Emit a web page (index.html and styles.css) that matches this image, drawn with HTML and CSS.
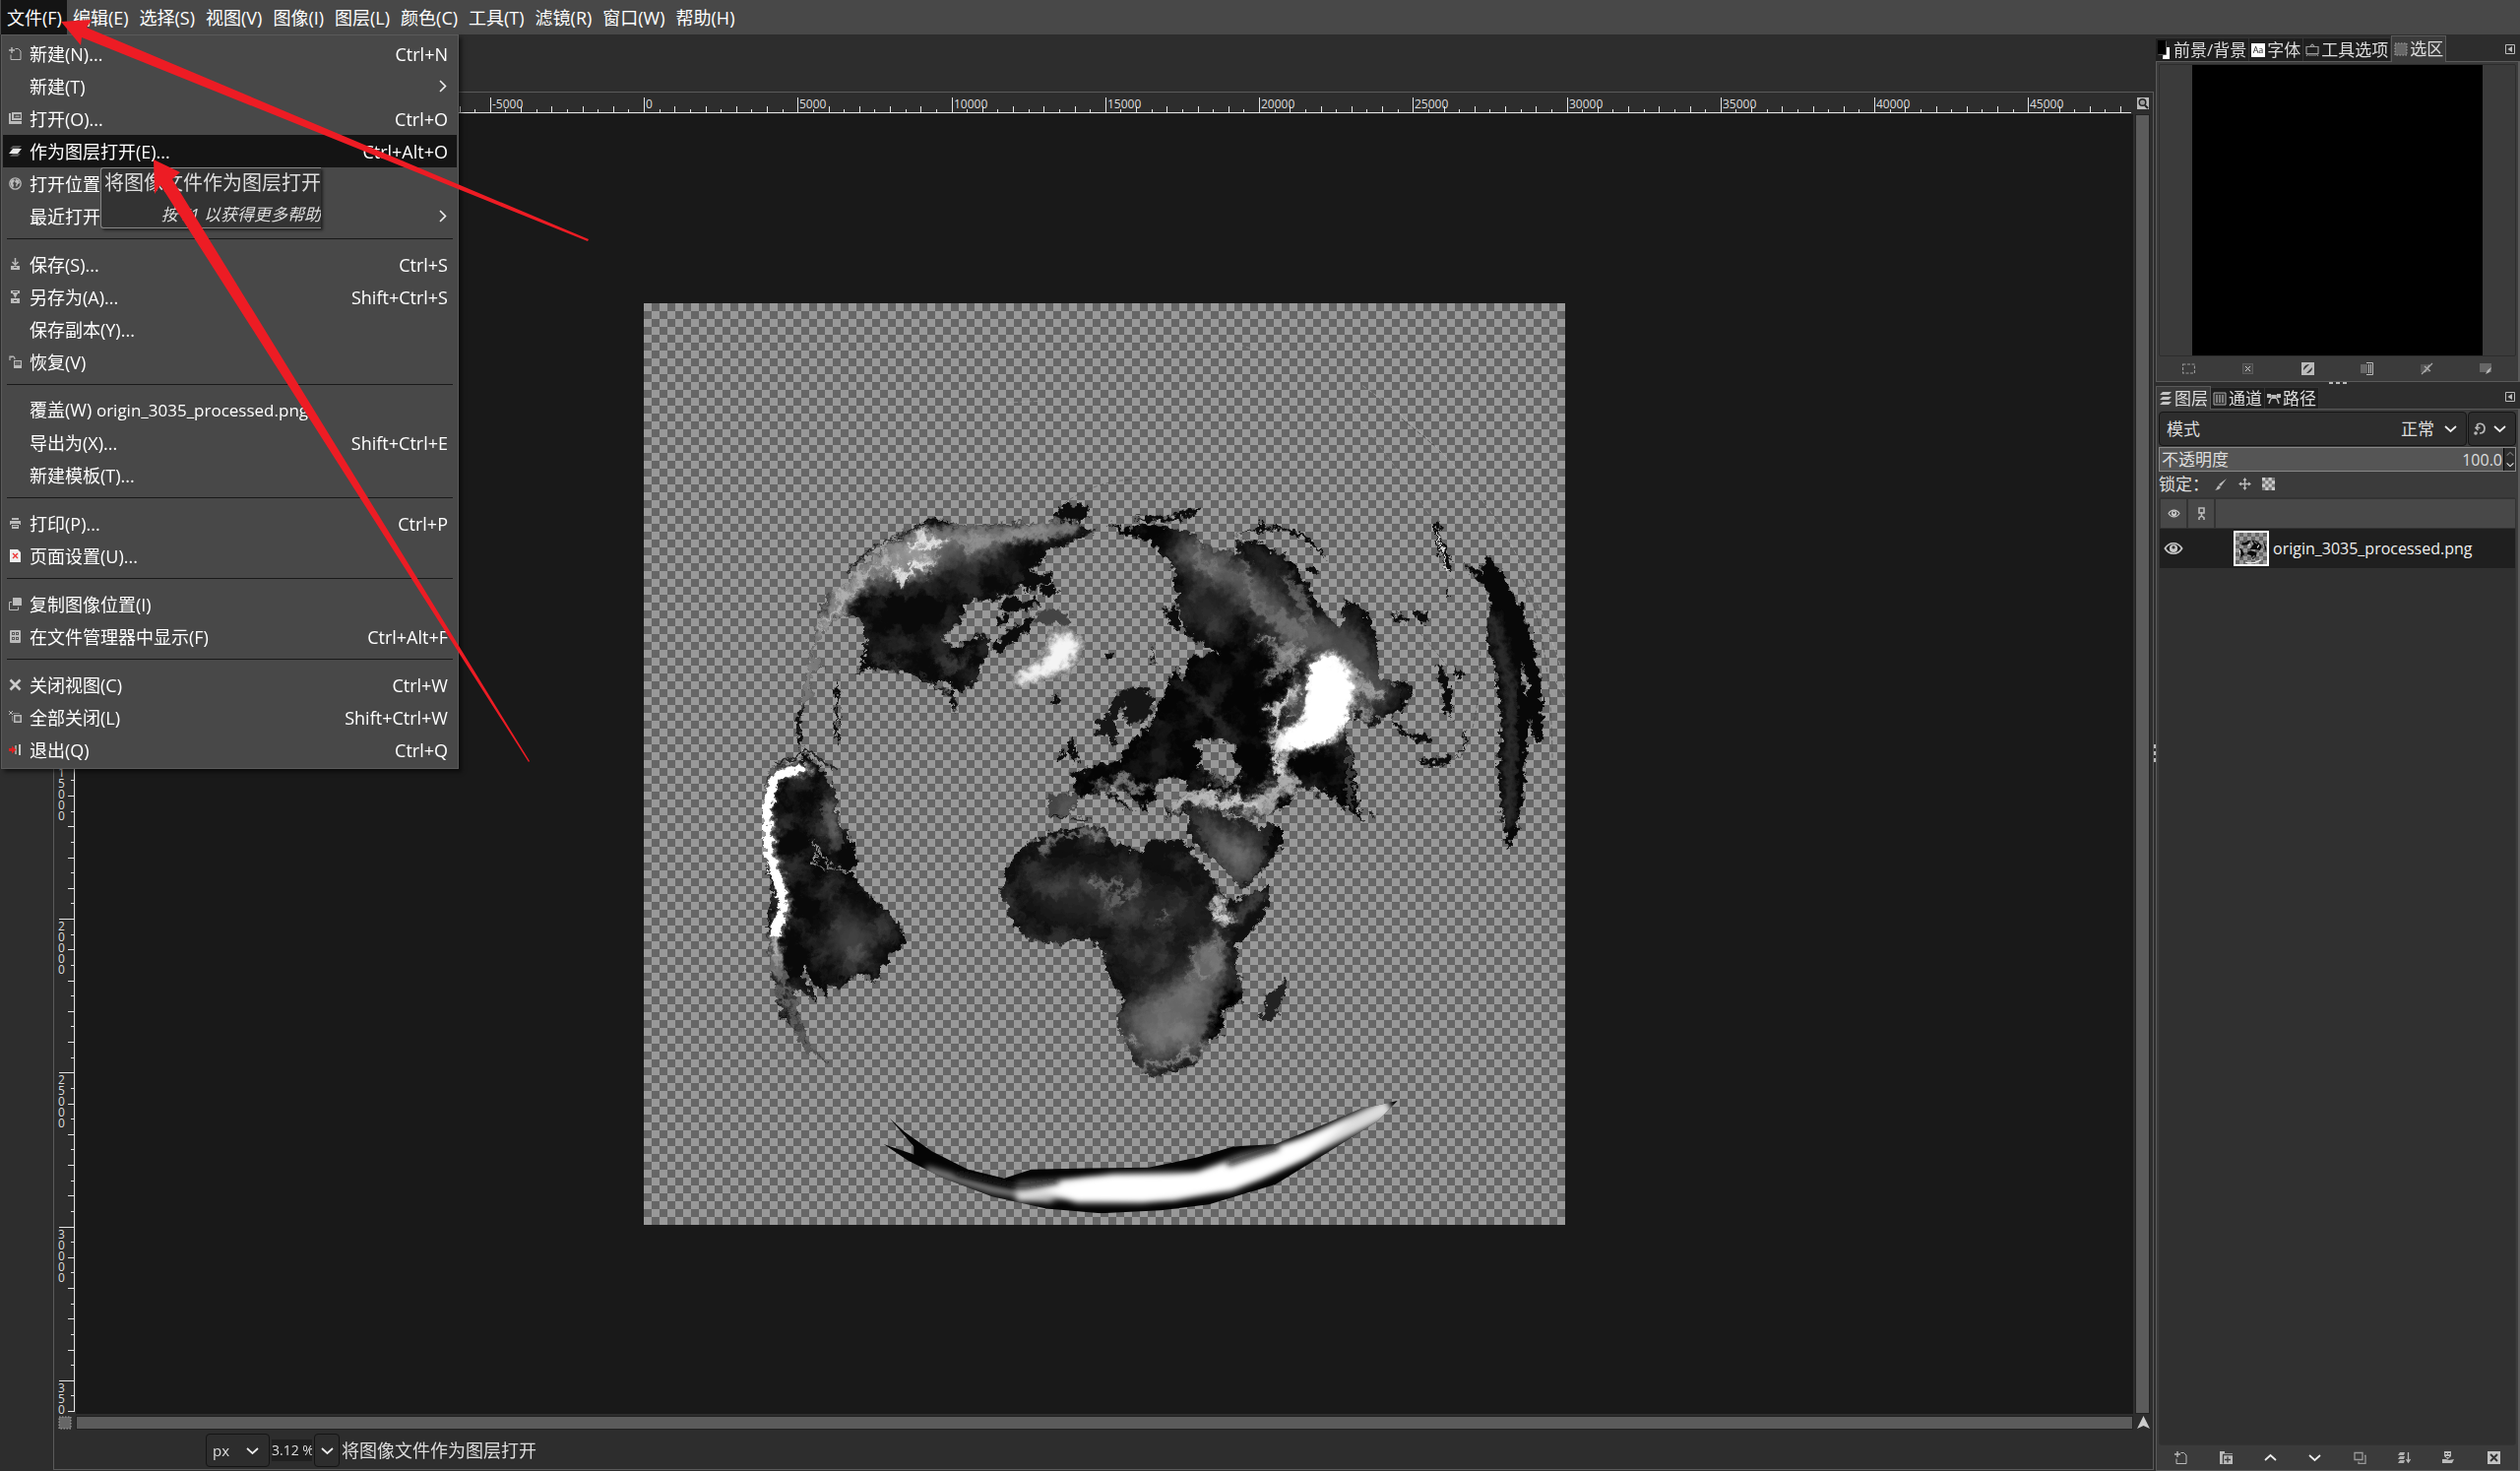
FILE: index.html
```html
<!DOCTYPE html>
<html lang="zh-CN">
<head>
<meta charset="utf-8">
<title>GIMP</title>
<link rel="stylesheet" href="styles.css">
</head>
<body>
<svg class="defs" aria-hidden="true">
  <symbol id="i-new" viewBox="0 0 13 13"><path d="M3 0v6M0 3h6" stroke="currentColor" stroke-width="1.4"/><path d="M6.5 1.5h3l2.5 2.500v8.500h-10v-5" fill="none" stroke="currentColor"/></symbol>
  <symbol id="i-open" viewBox="0 0 13 13"><path d="M3 0h10v8H3z" fill="currentColor"/><path d="M5 2h7v4H5z" fill="#555"/><path d="M6 5l2-2 1 1 1-1 1 2z" fill="#999"/><path d="M0 1h2v8h11v3H0z" fill="currentColor"/></symbol>
  <symbol id="i-layers" viewBox="0 0 13 13"><path d="M4 1h9l-3 3H1z" fill="#555"/><path d="M4 9h8l-3 3H1z" fill="#555"/><path d="M4 4h9l-4 5H0z" fill="#e8e8e8"/></symbol>
  <symbol id="i-globe" viewBox="0 0 13 13"><circle cx="6.500" cy="6.500" r="5.700" fill="none" stroke="currentColor" stroke-width="1.300"/><path d="M2 4l2-2 2 1-1 2-1 1 1 2-1 3-2-3zM7 2l3 1 1 3-2 1-1 3-1-2 1-2-2-1z" fill="currentColor"/></symbol>
  <symbol id="i-save" viewBox="0 0 13 13"><path d="M6.500 0v6M3.500 4l3 3 3-3" stroke="currentColor" stroke-width="1.500" fill="none"/><path d="M2 8h9v4H2z" fill="currentColor"/><path d="M5 9h3v1H5z" fill="#555"/></symbol>
  <symbol id="i-saveas" viewBox="0 0 13 13"><path d="M2 0h9v3H2zM2 8h9v5H2zM4 3h5l-2.500 5z" fill="currentColor"/><path d="M4 1h5v1H4zM5 10h3v1H5z" fill="#444"/></symbol>
  <symbol id="i-revert" viewBox="0 0 13 13"><path d="M1 5V1h4M2 2c3-2 4 0 4 2" fill="none" stroke="currentColor" stroke-width="1.200"/><path d="M5 5h8v8H5z" fill="currentColor"/><path d="M6 6h6v4H6z" fill="#666"/></symbol>
  <symbol id="i-print" viewBox="0 0 13 13"><path d="M3 1h7v2H3zM1 4h11v4h-1v-1H2v1H1zM3 8h7v4H3z" fill="currentColor"/><path d="M4 9h5v1H4z" fill="#555"/></symbol>
  <symbol id="i-page" viewBox="0 0 13 13"><path d="M1 0h8l3 3v10H1z" fill="#eee"/><path d="M4 4l5 5M9 4l-5 5" stroke="#e33" stroke-width="1.300"/></symbol>
  <symbol id="i-copy" viewBox="0 0 13 13"><path d="M3 4.500H.5v8h9v-3" fill="none" stroke="currentColor"/><path d="M4 0h8l1 1v7H4z" fill="currentColor"/></symbol>
  <symbol id="i-cab" viewBox="0 0 13 13"><rect x="1" width="11" height="13" rx="1" fill="currentColor"/><path d="M3 2h3v3H3zM7 2h3v3H7zM3 7h3v3H3zM7 7h3v3H7z" fill="#555"/><path d="M4 3h1v1H4zM8 3h1v1H8zM4 8h1v1H4zM8 8h1v1H8z" fill="#ccc"/></symbol>
  <symbol id="i-x" viewBox="0 0 13 13"><path d="M1.500 1.500l10 10M11.500 1.500l-10 10" stroke="#ccc" stroke-width="2.600"/></symbol>
  <symbol id="i-closeall" viewBox="0 0 13 13"><path d="M0 0l4 4M4 0L0 4" stroke="currentColor"/><path d="M3.500 5v5h1M4 2.500h7" stroke="#888" fill="none"/><path d="M5 4h8v8H5z" fill="currentColor"/><path d="M6.500 5.500h5v5h-5z" fill="#555"/></symbol>
  <symbol id="i-quit" viewBox="0 0 13 13"><path d="M5 1h7v11l-4-1z" fill="#3c4a3c"/><path d="M10 1h2v11h-2z" fill="#ccc"/><path d="M6 2h2v9H6z" fill="#999"/><path d="M0 5h3V2.500l4.500 4L3 10.500V8H0z" fill="#d22"/></symbol>
  <symbol id="i-chev" viewBox="0 0 13 13"><path d="M1 4l5.500 5L12 4" fill="none" stroke="#eee" stroke-width="1.700"/></symbol>
  <symbol id="i-up" viewBox="0 0 13 13"><path d="M1 9l5.500-5L12 9" fill="none" stroke="#eee" stroke-width="1.700"/></symbol>
  <symbol id="i-right" viewBox="0 0 13 13"><path d="M5 1l5.500 5.500L5 12" fill="none" stroke="#eee" stroke-width="1.600"/></symbol>
  <symbol id="i-fgbg" viewBox="0 0 14 20"><path d="M6 7h6v12H5z" fill="#fff"/><path d="M0 0h9v14H0z" fill="#000"/><path d="M.5 14.500H8.500V.5" stroke="#555" fill="none"/></symbol>
  <symbol id="i-font" viewBox="0 0 14 14"><path d="M0 0h14v14H0z" fill="#fff"/><text x="7" y="10" text-anchor="middle" font-size="9" fill="#222">Aa</text></symbol>
  <symbol id="i-tool" viewBox="0 0 14 14"><path d="M1 3.500h12v7H1zM5 3l2-2 2 2M1 13l1.500-2M13 13l-1.500-2M3 12h8" fill="none" stroke="#999" stroke-width="1.200"/></symbol>
  <symbol id="i-sel" viewBox="0 0 14 14"><path d="M1 1h12v12H1z" fill="#666" stroke="#aaa" stroke-dasharray="1.500 1.500"/></symbol>
  <symbol id="i-tabmenu" viewBox="0 0 10 10"><path d="M.5.5h9v9h-9z" fill="none" stroke="#bbb"/><path d="M7 2v6L2.500 5z" fill="#bbb"/></symbol>
  <symbol id="i-stack" viewBox="0 0 14 14"><path d="M4 0h9l-3 3H1zM4 5h9l-3 3H1zM4 10h9l-3 3H1z" fill="#c4c4c4"/></symbol>
  <symbol id="i-chan" viewBox="0 0 14 14"><path d="M1 1h12v12H1z" fill="#333" stroke="#aaa"/><path d="M4 3v8M7 3v8M10 3v8" stroke="#999" stroke-width="1.500"/></symbol>
  <symbol id="i-path" viewBox="0 0 14 14"><path d="M0 4h14M2 12c1-4 3-7 5-7s4 3 5 7" stroke="#bbb" stroke-width="1.500" fill="none"/><path d="M0 2h4v4H0zM10 2h4v4h-4zM5 3h4v4H5z" fill="#bbb"/></symbol>
  <symbol id="i-selall" viewBox="0 0 13 13"><path d="M.5 2h12v9H.5z" fill="none" stroke="#999" stroke-width="1.200" stroke-dasharray="3 1.500"/></symbol>
  <symbol id="i-selnone" viewBox="0 0 13 13"><path d="M1.500 1.500h10v10h-10z" fill="#484848" stroke="#777" stroke-dasharray="1 1"/><path d="M4 4l5 5M9 4l-5 5" stroke="#ccc"/></symbol>
  <symbol id="i-invert" viewBox="0 0 13 13"><path d="M0 0h13v13H0z" fill="#bbb"/><path d="M2 8c0-4 3-6 6-6zM11 5c0 4-3 6-6 6z" fill="#333"/></symbol>
  <symbol id="i-tochan" viewBox="0 0 13 13"><path d="M0 2h7v9H0z" fill="#666"/><path d="M6 .5h6.500v12H6" fill="none" stroke="#bbb"/><path d="M8.500 2v9M10.500 2v9" stroke="#bbb"/></symbol>
  <symbol id="i-topath" viewBox="0 0 13 13"><path d="M0 2h9v8H0z" fill="#555"/><path d="M1 12L12 1M4 4l6 5M9 3l-5 7" stroke="#aaa" stroke-width="1.300"/></symbol>
  <symbol id="i-stroke" viewBox="0 0 13 13"><path d="M0 1h12v9H0z" fill="#666"/><path d="M12 5l-2 5-4 2 2-4z" fill="#bbb"/></symbol>
  <symbol id="i-reset" viewBox="0 0 13 13"><path d="M2.500 5.500h5M5.500 3L3 5.500 5.500 8" fill="none" stroke="#b8b8b8" stroke-width="1.500"/><path d="M4 3c2-3 8-2 8 3 0 3-2 5-5 5" fill="none" stroke="#b8b8b8" stroke-width="1.700"/><circle cx="3" cy="11" r="1.800" fill="#b8b8b8"/></symbol>
  <symbol id="i-brush" viewBox="0 0 13 13"><path d="M12 1L6 9 4 7z" fill="#bbb"/><path d="M4 8l2 2-2 2-4 1c2-1 2-4 4-5z" fill="#bbb"/></symbol>
  <symbol id="i-move" viewBox="0 0 13 13"><path d="M6.500 1v11M1 6.500h11" stroke="#bbb" stroke-width="1.400"/><path d="M6.500 0l2 3h-4zM6.500 13l2-3h-4zM0 6.500l3-2v4zM13 6.500l-3-2v4z" fill="#bbb"/></symbol>
  <symbol id="i-alpha" viewBox="0 0 12 12"><path d="M0 0h12v12H0z" fill="#777"/><path d="M0 0h3v3H0zM6 0h3v3H6zM3 3h3v3H3zM9 3h3v3H9zM0 6h3v3H0zM6 6h3v3H6zM3 9h3v3H3zM9 9h3v3H9z" fill="#ccc"/></symbol>
  <symbol id="i-eye" viewBox="0 0 18 13"><path d="M1 6.500C5 0 13 0 17 6.500 13 13 5 13 1 6.500z" fill="none" stroke="#c8c8c8" stroke-width="1.600"/><circle cx="9" cy="6.500" r="3.800" fill="#c8c8c8"/><circle cx="9" cy="5.500" r="1.500" fill="#333"/></symbol>
  <symbol id="i-chain" viewBox="0 0 9 14"><path d="M2 1h5v5H2zM2 13v-2l2.500-2L7 11v2M4.500 5v5" fill="none" stroke="#bbb" stroke-width="1.600"/></symbol>
  <symbol id="i-group" viewBox="0 0 13 13"><path d="M0 0h5v2h8v11H0z" fill="#bbb"/><path d="M3 3.500h10M3.500 3.500v9M8 5.500v6M5 8.500h6" stroke="#3a3a3a" stroke-width="1.300"/></symbol>
  <symbol id="i-dup" viewBox="0 0 13 13"><path d="M1 1.500h8v7H1zM11 4.500h1v8H5v-2" fill="none" stroke="#999" stroke-width="1.300"/></symbol>
  <symbol id="i-merge" viewBox="0 0 13 13"><path d="M2 1h5L6 4H0zM2 5h5L6 8H0zM2 9h5l-1 3H0z" fill="#b0b0b0"/><path d="M10.500 1v9M8.500 8l2 3 2-3" stroke="#bbb" fill="none" stroke-width="1.300"/></symbol>
  <symbol id="i-mask" viewBox="0 0 13 13"><path d="M2 0h7v5L5.500 8 2 5zM0 8h4l3 1 5-1-2 4H0z" fill="#bbb"/><path d="M3 2h2v1H3zM6 2h2v1H6zM4 5h3v1H4z" fill="#333"/></symbol>
  <symbol id="i-del" viewBox="0 0 13 13"><path d="M0 0h13v13H0z" fill="#c4c4c4"/><path d="M3 3l7 7M10 3l-7 7" stroke="#333" stroke-width="2"/></symbol>
  <symbol id="i-zoom" viewBox="0 0 12 12"><path d="M0 0h12v12H0z" fill="#bbb"/><circle cx="5.500" cy="5" r="3.300" fill="#999" stroke="#222" stroke-width="1.500"/><path d="M8 8l3 3" stroke="#222" stroke-width="2"/></symbol>
  <symbol id="i-nav" viewBox="0 0 13 13"><path d="M6.500 0L13 13 6.500 10 0 13z" fill="#ccc"/></symbol>
</svg>

<nav class="menubar">
  <button class="active">文件(F)</button><button>编辑(E)</button><button>选择(S)</button><button>视图(V)</button><button>图像(I)</button><button>图层(L)</button><button>颜色(C)</button><button>工具(T)</button><button>滤镜(R)</button><button>窗口(W)</button><button>帮助(H)</button>
</nav>

<main class="workspace">
  <aside class="toolbox"></aside>

  <section class="image-window">
    <div class="corner"></div>
    <svg class="ruler-h" id="ruler-h"></svg>
    <button class="icon-cell" aria-label="缩放"><svg width="12" height="12"><use href="#i-zoom"/></svg></button>
    <svg class="ruler-v" id="ruler-v"></svg>
    <div class="viewport">
      <div class="picture" id="picture">
        <svg viewBox="22 13 1529 1529" class="map">
          <defs>
            <filter id="rough" x="-5%" y="-5%" width="110%" height="110%" color-interpolation-filters="sRGB"><feTurbulence type="fractalNoise" baseFrequency=".09" numOctaves="4" seed="4"/><feDisplacementMap in="SourceGraphic" scale="22" xChannelSelector="R" yChannelSelector="G"/></filter>
            <filter id="wisp" x="-20%" y="-20%" width="140%" height="140%" color-interpolation-filters="sRGB"><feGaussianBlur in="SourceGraphic" stdDeviation="5" result="b"/><feTurbulence type="fractalNoise" baseFrequency=".03" numOctaves="5" seed="9" result="n"/><feDisplacementMap in="b" in2="n" scale="60" xChannelSelector="R" yChannelSelector="G"/></filter>
            <filter id="soft" x="-40%" y="-40%" width="180%" height="180%"><feGaussianBlur stdDeviation="18"/></filter>
            <filter id="soft2" x="-30%" y="-30%" width="160%" height="160%"><feGaussianBlur stdDeviation="5"/></filter>
            <filter id="terrain" x="0" y="0" width="100%" height="100%" color-interpolation-filters="sRGB"><feTurbulence type="fractalNoise" baseFrequency=".02" numOctaves="6" seed="21"/><feColorMatrix values="0 0 0 0 1  0 0 0 0 1  0 0 0 0 1  3 0 0 0 -1.300"/></filter>
            <filter id="shade" x="0" y="0" width="100%" height="100%" color-interpolation-filters="sRGB"><feTurbulence type="fractalNoise" baseFrequency=".03" numOctaves="5" seed="5"/><feColorMatrix values="0 0 0 0 0  0 0 0 0 0  0 0 0 0 0  0 3 0 0 -1.200"/></filter>
            <clipPath id="c-na"><path d="M773 392L740 378 760 365 750 348 735 345 718 352 715 368 690 380 640 378 600 382 545 384 520 372 490 375 460 390 420 420 385 448 355 482 330 495 318 520 305 560 298 600 290 640 280 685 274 710 280 750 286 745 281 705 290 680 302 665 297 640 303 626 322 616 310 605 303 606 306 580 322 555 345 532 370 528 386 545 388 580 385 615 372 632 395 618 430 622 465 628 500 645 515 638 530 645 545 655 562 652 572 640 583 615 598 590 590 560 565 570 545 580 515 575 525 560 545 545 555 515 570 505 600 508 608 500 640 490 665 455 685 440 690 422 735 408Z"/></clipPath>
            <clipPath id="c-sa"><path d="M225 800L245 778 275 778 290 760 320 790 340 830 345 870 370 910 375 945 360 955 400 1000 440 1035 456 1065 452 1082 428 1095 410 1135 370 1128 345 1150 325 1145 330 1162 300 1140 290 1108 286 1130 312 1172 272 1150 282 1200 295 1240 330 1278 285 1245 250 1190 232 1120 226 1040 235 990 222 920 218 860Z"/></clipPath>
            <clipPath id="c-as"><path clip-rule="evenodd" d="M795 378L830 388 860 380 930 392 960 420 1005 428 1010 405 1050 412 1095 438 1120 470 1128 490 1150 525 1180 555 1185 505 1215 518 1237 560 1241 600 1240 635 1265 645 1285 638 1298 660 1280 690 1262 700 1240 695 1245 712 1215 710 1192 690 1185 725 1200 760 1202 820 1213 870 1180 848 1150 820 1110 818 1090 848 1060 862 1030 868 985 855 975 850 982 865 1025 870 1045 892 1058 876 1082 880 1082 910 1055 950 1015 985 990 955 945 918 925 890 928 858 890 865 885 850 920 828 925 805 895 800 870 812 874 835 855 842 862 860 840 842 825 825 800 815 795 822 838 858 822 850 785 822 765 828 738 832 738 845 722 865 700 868 690 862 695 828 735 826 742 805 728 795 770 780 810 772 830 738 865 712 875 680 905 620 915 640 930 600 975 592 925 565 910 520 905 485 900 450 880 425 850 400 820 398ZM935 740L950 760 940 780 975 795 1000 810 1015 790 1000 765 1003 745 965 735Z"/></clipPath>
            <clipPath id="c-af"><path d="M622 960L625 945 665 905 700 890 760 880 790 885 795 905 850 925 860 905 915 905 930 922 955 950 975 985 995 1002 1030 995 1060 975 1058 1010 1035 1050 1007 1075 1003 1125 1018 1142 1015 1170 982 1190 980 1225 957 1240 940 1275 905 1287 858 1297 835 1275 825 1240 805 1215 818 1165 790 1125 785 1085 760 1070 700 1075 660 1068 635 1045 625 1010 612 990 622 975Z"/></clipPath>
            <clipPath id="c-au"><path clip-rule="evenodd" d="M1382 445L1412 458 1422 430 1445 460 1475 510 1500 580 1510 640 1516 740 1500 735 1492 700 1488 740 1482 830 1470 890 1457 920 1443 850 1440 780 1445 700 1434 620 1420 560 1430 520 1418 485ZM1478 610L1488 630 1490 670 1480 645Z"/></clipPath>
            <clipPath id="c-an"><path d="M420 1408L470 1425 470 1412 430 1365 455 1388 500 1420 560 1450 620 1465 665 1450 760 1448 860 1447 940 1430 1000 1412 1070 1408 1140 1380 1210 1350 1273 1336 1240 1370 1160 1420 1070 1475 960 1508 880 1518 780 1523 690 1515 600 1495 520 1465 460 1435Z"/></clipPath>
          </defs>
          <g filter="url(#rough)">
            <g clip-path="url(#c-na)">
              <path d="M250 330h540v440H250z" fill="#0a0a0a"/>
              <path d="M285 680L310 590 345 510 400 450 480 405 610 395 740 378" stroke="#777" stroke-width="36" fill="none" filter="url(#soft2)"/>
              <path d="M390 470L520 430 620 400" stroke="#666" stroke-width="45" fill="none" filter="url(#soft)"/>
              <path d="M430 460L500 425" stroke="#ccc" stroke-width="20" filter="url(#soft)"/>
              <g filter="url(#wisp)" fill="none" stroke="#ddd"><path d="M310 560L335 515 380 470 430 430" stroke-width="8"/><path d="M440 425L520 405 620 405 700 390" stroke="#999" stroke-width="8"/><path d="M430 462L500 440M465 420l50-15" stroke-width="13" stroke="#fff"/><path d="M400 605l60 15M520 620l40-25" stroke="#333" stroke-width="10"/></g>
              <path d="M250 330h540v440H250z" filter="url(#terrain)" opacity=".12"/>
              <path d="M360 375l80 12 90-22 60 12 150-12" stroke="#000" stroke-width="10" fill="none" filter="url(#soft2)"/>
            </g>
            <g fill="#0c0c0c">
              <path d="M640 478l20-22 25 8 15-8-4 22-25 6-10 10zM612 508l30-8 12 8 20-8 4 12-25 6-20 12-20-8zM600 590l20-30 35-20 15-10-15 30-25 20-22 14zM680 490l20-14 10 14-18 10zM540 655l-2 34-8-18 6-8-14-6zM605 535l18-6 4 12-20 8zM650 510l20 6-14 10z"/>
              <path d="M670 535l20-18 20 4 22 18-5 15-20-14-24 8z" fill="#444"/>
              <path d="M705 370l8-18 28-8 20 6 0 16-30 12zM700 665l18 3-6 10-14-3zM788 596l14 0 0 8-12 2z"/>
              <path d="M860 375l-28-8 40-3 25 6 10-10 40-10-10 15-45 10zM1000 400l40-12 5-16 10 12 40 2 35 20 30 35-35-30-30-20-35-2z"/>
              <path d="M865 578l5 30 6 6-10-5zM885 520l20 0 10 30-6 10-16-15z"/>
              <path d="M776 728L775 708 790 698 800 672 822 650 862 652 855 662 868 668 862 700 835 712 822 705 818 690 828 680 818 678 810 692 803 712 808 745 798 748 792 728z" fill="#161616"/>
              <path d="M714 755l10 2-6 14-8-4zM730 735l8-4-2 20 10 15-8 12-8-8z"/>
              <path d="M1333 380l8-8 4 30 18 35-6 30-16-40zM1352 480l8 20-4 8zM1335 610l20 20 8 25 0 45-12-8-2-35zM1120 450l18 0 5 12-20-4zM1265 700l25 25 20 5 20-2-2 15-15 0-45-25zM1300 772l62-7 0 12-45 2zM1386 722l4-4-6 25-10 25 6-28zM1260 530l20 0 8 10-16 3zM1298 522l22 4 6 14-14 4zM1368 615l14 14-8 10z"/>
              <path d="M1225 852l12 10-6 6zM1134 825l12 0-3 12-8-4zM1050 1205l-6-8 10-15 0-20 22-14 6-20 8 8-14 50-14 22z" fill="#222"/>
              <path d="M342 640l4 8-2 40-4 15 10 50-12-30zM340 690l8 6-2 20z"/>
            </g>
            <path d="M700 550l38 3 17 22-7 25-18 25-30 15-38 2-32 12 10-28 30-20 20-26z" fill="#777"/>
            <path d="M705 560l34 3 8 17-25 42-45 14-42 12 12-22 38-20z" fill="#f4f4f4" filter="url(#soft2)"/>
            <g clip-path="url(#c-sa)">
              <path d="M200 750h270v540H200z" fill="#090909"/>
              <path d="M350 1010L420 1060 380 1110 320 1090z" fill="#444" filter="url(#soft)"/>
              <path d="M325 840l20 80" stroke="#444" stroke-width="22" filter="url(#soft2)"/>
              <path d="M300 785L240 795 226 840 230 910 250 980 256 1020 238 1065 245 1130" stroke="#ddd" stroke-width="13" fill="none" filter="url(#soft2)"/>
              <path d="M290 785L240 798 224 860 230 930 248 980 252 1020 240 1060" stroke="#fff" stroke-width="14" fill="none"/>
              <path d="M235 1100L265 1190 310 1265" stroke="#666" stroke-width="16" fill="none" filter="url(#wisp)"/>
              <path d="M200 750h270v540H200z" filter="url(#terrain)" opacity=".15"/>
            </g>
            <path d="M362 958l-35-15-25-40 8 36-10 5 25 8" stroke="#999" stroke-width="2.500" fill="none"/>
            <g clip-path="url(#c-as)">
              <path d="M680 340h640v660H680z" fill="#050505"/>
              <path d="M910 410L960 450 1040 490 1100 560 1180 570" stroke="#5c5c5c" stroke-width="55" fill="none" filter="url(#soft)"/>
              <path d="M930 500l60 60" stroke="#333" stroke-width="50" filter="url(#soft)"/>
              <path d="M910 640l80 80" stroke="#333" stroke-width="8" filter="url(#soft2)"/>
              <path d="M1010 660l40 0" stroke="#444" stroke-width="40" filter="url(#soft)"/>
              <path d="M1180 560L1250 680" stroke="#5a5a5a" stroke-width="50" filter="url(#soft)"/>
              <path d="M920 850h160l-40 110-40 30z" fill="#1c1c1c"/><path d="M935 870l40 60 50 50 20-60z" fill="#777" filter="url(#soft)"/>
              <path d="M690 865v-45h50v40z" fill="#444"/>
              <path d="M1130 605L1165 590 1192 612 1205 650 1195 700 1165 742 1110 754 1075 757 1065 732 1090 715 1112 700 1120 640Z" fill="#fff" filter="url(#soft2)"/>
              <path d="M1132 608L1165 596 1185 618 1196 650 1187 700 1160 738 1110 750 1082 748 1085 725 1115 710 1122 650Z" fill="#fff"/>
              <path d="M1100 625L1120 640 1112 700 1085 715 1088 680z" fill="#383838" filter="url(#soft2)"/>
              <g filter="url(#wisp)" fill="none" stroke="#eee"><path d="M885 855L930 830 970 835 1040 850 1090 820 1085 770" stroke="#aaa" stroke-width="26"/><path d="M940 820l40 10 60 20" stroke-width="7"/><path d="M1060 740L1085 800M1070 720L1100 650" stroke-width="15"/><path d="M1045 570L1090 600 1055 640M1090 570l20 50" stroke-width="14" stroke="#999"/><path d="M1000 440L1040 520 1120 560M940 410L960 470M1080 460l60 90" stroke="#777" stroke-width="11"/><path d="M780 822L800 808 850 815" stroke="#bbb" stroke-width="9"/><path d="M1190 620l50 50M1225 700l-20-30" stroke="#aaa" stroke-width="14"/><path d="M960 795h45" stroke-width="6"/></g>
              <path d="M1190 750l5 100" stroke="#3a3a3a" stroke-width="18" filter="url(#soft2)"/>
              <path d="M680 340h640v660H680z" filter="url(#terrain)" opacity=".1"/>
            </g>
            <g clip-path="url(#c-af)">
              <path d="M600 870h480v440H600z" fill="#101010"/>
              <path d="M640 960L780 950 960 1010 960 1060 700 1030z" fill="#262626" filter="url(#soft)"/>
              <path d="M830 1180L960 1090 990 1120 950 1240 860 1285 820 1210z" fill="#666" filter="url(#soft)"/>
              <path d="M800 1060h110l0 60-80 20z" fill="#222" filter="url(#soft)"/>
              <path d="M935 1085l30-15 20 30-10 35-35-5z" fill="#666" filter="url(#soft2)"/>
              <path d="M1000 1040l50-50" stroke="#444" stroke-width="15" filter="url(#soft2)"/>
              <g filter="url(#wisp)" fill="none" stroke="#ddd"><path d="M675 912L730 892 785 892" stroke="#999" stroke-width="10"/><path d="M760 972h35l15 35M830 985l22 0M890 1010l0 20" stroke="#777" stroke-width="12"/><path d="M978 1000l0 40 20-10" stroke-width="15"/><path d="M935 1080l0 45 25 10M965 1070l20 20" stroke="#aaa" stroke-width="6"/><path d="M840 1280L910 1278 950 1250M825 1215l20 35" stroke="#aaa" stroke-width="9"/></g>
              <path d="M960 1240l25-50 20-40" stroke="#000" stroke-width="22" fill="none" filter="url(#soft2)"/>
              <path d="M600 870h480v440H600z" filter="url(#terrain)" opacity=".13"/>
            </g>
            <g clip-path="url(#c-au)"><path d="M1370 420h160v510h-160z" fill="#080808"/><path d="M1430 530L1462 660 1458 880" stroke="#2c2c2c" stroke-width="20" fill="none" filter="url(#soft2)"/></g>
            <path d="M1340 390l6 40 10 30" stroke="#ddd" stroke-width="3" fill="none"/>
            <g fill="none" stroke="#222" stroke-width="3"><path d="M362 455L400 420 460 388"/><path d="M240 776l30-8 18-14 30 16 22 18" stroke-width="5"/><path d="M480 626l25 22 30 16 6 22M730 870h40" stroke-width="4"/></g>
          </g>
          <g clip-path="url(#c-an)">
            <path d="M410 1330h870v200H410z" fill="#050505"/>
            <path d="M490 1450L600 1483 700 1500" stroke="#888" stroke-width="12" fill="none" filter="url(#soft2)"/>
            <path d="M640 1488L760 1480 900 1485 1040 1450 1150 1400 1260 1345" stroke="#ddd" stroke-width="30" fill="none" filter="url(#soft2)"/>
            <path d="M680 1478L800 1458 940 1455 1010 1428 1120 1400 1200 1365 1120 1430 1000 1485 850 1505 740 1505z" fill="#fff" filter="url(#soft2)"/>
            <path d="M540 1455L650 1478 710 1468M990 1440L1075 1412" stroke="#0a0a0a" stroke-width="10" fill="none" filter="url(#soft2)"/>
            <path d="M580 1500Q780 1550 980 1512" stroke="#000" stroke-width="10" fill="none"/>
          </g>
          <g fill="none" stroke="#bbb" stroke-dasharray="7 4" stroke-width="1"><path d="M1215 150Q1430 300 1510 520T1535 640"/><path d="M1280 205L1335 250" stroke="#222"/><path d="M1480 470Q1528 560 1530 780M720 345q50-38 120-40" stroke="#444"/><path d="M990 75l60 20M625 178l60-3M1190 180Q1260 270 1330 370" opacity=".7"/><path d="M1410 590Q1410 720 1375 770M1310 560l50 60" stroke="#444"/></g>
        </svg>
      </div>
    </div>
    <div class="vscroll"></div>
    <button class="icon-cell" aria-label="快速蒙版"><svg width="14" height="14"><use href="#i-sel"/></svg></button>
    <div class="hscroll"></div>
    <button class="icon-cell nav" aria-label="导航"><svg width="13" height="13"><use href="#i-nav"/></svg></button>
    <footer class="statusbar">
      <span class="combo unit"><select aria-label="单位"><option>px</option></select><svg width="13" height="13"><use href="#i-chev"/></svg></span>
      <input class="zoom-value" aria-label="缩放比例" value="3.12 %">
      <button class="combo drop" aria-label="缩放级别"><svg width="13" height="13"><use href="#i-chev"/></svg></button>
      <output>将图像文件作为图层打开</output>
    </footer>
  </section>

  <div class="splitter"><i></i><i></i><i></i></div>

  <aside class="docks">
    <header class="tabs top">
      <button><svg width="14" height="20"><use href="#i-fgbg"/></svg>前景/背景</button><button><svg width="14" height="14"><use href="#i-font"/></svg>字体</button><button><svg width="14" height="14"><use href="#i-tool"/></svg>工具选项</button><button class="on"><svg width="14" height="14"><use href="#i-sel"/></svg>选区</button>
      <a href="#" class="tabmenu" aria-label="配置此标签"><svg width="10" height="10"><use href="#i-tabmenu"/></svg></a>
    </header>
    <section class="pane">
      <div class="sel-frame"><div class="sel-preview"></div></div>
      <div class="actions">
        <button><svg><use href="#i-selall"/></svg></button><button><svg><use href="#i-selnone"/></svg></button><button><svg><use href="#i-invert"/></svg></button><button><svg><use href="#i-tochan"/></svg></button><button><svg><use href="#i-topath"/></svg></button><button><svg><use href="#i-stroke"/></svg></button>
      </div>
    </section>
    <div class="hsplit"><i></i><i></i><i></i></div>
    <header class="tabs">
      <button class="on"><svg width="14" height="14"><use href="#i-stack"/></svg>图层</button><button><svg width="14" height="14"><use href="#i-chan"/></svg>通道</button><button><svg width="14" height="14"><use href="#i-path"/></svg>路径</button>
      <a href="#" class="tabmenu" aria-label="配置此标签"><svg width="10" height="10"><use href="#i-tabmenu"/></svg></a>
    </header>
    <section class="pane layers">
      <div class="mode-row">
        <div class="combo mode"><label for="mode">模式</label><select id="mode"><option>正常</option></select><svg width="13" height="13"><use href="#i-chev"/></svg></div>
        <button class="combo group" aria-label="切换模式组"><svg width="13" height="13"><use href="#i-reset"/></svg><svg width="13" height="13"><use href="#i-chev"/></svg></button>
      </div>
      <div class="opacity"><label for="op">不透明度</label><input id="op" value="100.0"><span class="spin"><svg class="dim"><use href="#i-up"/></svg><svg><use href="#i-chev"/></svg></span></div>
      <div class="lock"><span>锁定：</span><button aria-label="锁定像素"><svg><use href="#i-brush"/></svg></button><button aria-label="锁定位置"><svg><use href="#i-move"/></svg></button><button aria-label="锁定透明"><svg><use href="#i-alpha"/></svg></button></div>
      <div class="tree">
        <div class="tree-head"><span><svg width="13" height="9"><use href="#i-eye"/></svg></span><span><svg width="9" height="14"><use href="#i-chain"/></svg></span><span></span></div>
        <div class="layer">
          <svg class="eye" width="20" height="14"><use href="#i-eye"/></svg>
          <span class="thumb"><svg viewBox="22 13 1529 1529"><g fill="#0a0a0a"><path d="M300 600L420 420 770 380 600 600 380 620zM220 790h80l155 280-120 100-40 100zM620 950l150-70 200 60 90 40-50 200-150 130-100-200-180-50zM800 380l200 30 230 150 60 120-80 190-200-50-300 0 200-250zM1390 440l130 300-60 180z"/></g><path d="M640 640l90-80M1080 750l90-140M230 850l20 200M500 1450q350 120 760-110" stroke="#eee" stroke-width="55" fill="none"/><path d="M920 430l150 120M850 1230l100-100M400 480l200-70" stroke="#777" stroke-width="70"/></svg></span>
          <span class="filename">origin_3035_processed.png</span>
        </div>
      </div>
      <div class="actions">
        <button><svg><use href="#i-new"/></svg></button><button><svg><use href="#i-group"/></svg></button><button><svg><use href="#i-up"/></svg></button><button><svg><use href="#i-chev"/></svg></button><button><svg><use href="#i-dup"/></svg></button><button><svg><use href="#i-merge"/></svg></button><button><svg><use href="#i-mask"/></svg></button><button><svg><use href="#i-del"/></svg></button>
      </div>
    </section>
  </aside>
</main>

<div class="menu" role="menu">
  <button><svg><use href="#i-new"/></svg><span>新建(N)...</span><kbd>Ctrl+N</kbd></button>
  <button><svg></svg><span>新建(T)</span><svg><use href="#i-right"/></svg></button>
  <button><svg><use href="#i-open"/></svg><span>打开(O)...</span><kbd>Ctrl+O</kbd></button>
  <button class="hover"><svg><use href="#i-layers"/></svg><span>作为图层打开(E)...</span><kbd>Ctrl+Alt+O</kbd></button>
  <button><svg><use href="#i-globe"/></svg><span>打开位置</span></button>
  <button><svg></svg><span>最近打开</span><svg><use href="#i-right"/></svg></button>
  <hr>
  <button><svg><use href="#i-save"/></svg><span>保存(S)...</span><kbd>Ctrl+S</kbd></button>
  <button><svg><use href="#i-saveas"/></svg><span>另存为(A)...</span><kbd>Shift+Ctrl+S</kbd></button>
  <button><svg></svg><span>保存副本(Y)...</span></button>
  <button><svg><use href="#i-revert"/></svg><span>恢复(V)</span></button>
  <hr>
  <button><svg></svg><span>覆盖(W) <b>origin_3035_processed.png</b></span></button>
  <button><svg></svg><span>导出为(X)...</span><kbd>Shift+Ctrl+E</kbd></button>
  <button><svg></svg><span>新建模板(T)...</span></button>
  <hr>
  <button><svg><use href="#i-print"/></svg><span>打印(P)...</span><kbd>Ctrl+P</kbd></button>
  <button><svg><use href="#i-page"/></svg><span>页面设置(U)...</span></button>
  <hr>
  <button><svg><use href="#i-copy"/></svg><span>复制图像位置(I)</span></button>
  <button><svg><use href="#i-cab"/></svg><span>在文件管理器中显示(F)</span><kbd>Ctrl+Alt+F</kbd></button>
  <hr>
  <button><svg><use href="#i-x"/></svg><span>关闭视图(C)</span><kbd>Ctrl+W</kbd></button>
  <button><svg><use href="#i-closeall"/></svg><span>全部关闭(L)</span><kbd>Shift+Ctrl+W</kbd></button>
  <button><svg><use href="#i-quit"/></svg><span>退出(Q)</span><kbd>Ctrl+Q</kbd></button>
</div>

<div class="tooltip" role="tooltip"><p>将图像文件作为图层打开</p><p class="hint">按 F1 以获得更多帮助</p></div>

<svg class="arrows" width="620" height="790" aria-hidden="true"><path d="M62 22L93 20 88 28 598 243 597 245 83 38 82 46ZM156 162L183 175 175 182 538 773 537 774 163 188 157 197Z" fill="#ed1c24"/></svg>
<script src="rulers.js"></script>
</body>
</html>
```
FILE: styles.css
```css
* { box-sizing: border-box; }
body { margin: 0; min-height: 100vh; display: flex; flex-direction: column; background: #2d2d2d; color: #fff; font: 18px/24px "Open Sans", "Noto Sans CJK SC", sans-serif; }
button, input, select { margin: 0; padding: 0; border: 0; background: none; color: inherit; font: inherit; appearance: none; outline: 0; }
svg { display: block; flex: none; }
.defs { position: absolute; width: 0; height: 0; }

.menubar { display: flex; height: 35px; padding-left: 1px; background: #484848; }
.menubar button { padding: 0 5px 0 6px; white-space: nowrap; }
.menubar .active { background: #141414; }

.workspace { flex: 1; display: flex; }
.toolbox { width: 54px; }
.image-window { flex: 1; min-width: 0; margin: 58px 0 1px; border: 1px solid #5a5a5a; display: grid; grid-template: 22px 1fr 18px 38px / 22px 1fr 20px; }
.ruler-h { width: 100%; height: 22px; }
.ruler-v { width: 22px; height: 100%; min-height: 0; }
.ruler-h line, .ruler-v line { stroke: #e4e4e4; shape-rendering: crispEdges; }
.ruler-h text, .ruler-v text { fill: #ddd; font-size: 12px; }
.icon-cell { display: flex; align-items: center; justify-content: center; }
.viewport { background: #191919; display: flex; align-items: center; justify-content: center; overflow: hidden; }
.picture { width: 936px; height: 936px; background: conic-gradient(#666 25%, #999 0 50%, #666 0 75%, #999 0) 0 0 / 16px 16px; }
.map { width: 100%; height: 100%; }
.vscroll { margin: 0 3px 0 2px; background: #5b5b5b; border: 1px solid #222; }
.hscroll { margin: 2px 0; background: #5b5b5b; border: 1px solid #222; }
.nav { padding-bottom: 2px; }
.statusbar { grid-column: 1 / -1; display: flex; align-items: center; padding-left: 154px; color: #ddd; }
.combo { display: flex; align-items: center; border: 1px solid #141414; border-radius: 4px; background: #2d2d2d; height: 34px; }
.unit { width: 65px; padding: 0 10px 0 6px; font-size: 15px; }
.unit select { flex: 1; min-width: 0; }
.zoom-value { width: 41px; height: 22px; margin: 0 2px 0 2px; background: #202020; font-size: 14px; }
.drop { width: 26px; justify-content: center; margin-right: 2px; }

.splitter { width: 2px; display: flex; flex-direction: column; align-items: center; justify-content: center; gap: 3px; }
.splitter i { width: 2px; height: 4px; background: #bbb; }

.docks { width: 370px; display: flex; flex-direction: column; font-size: 17px; color: #ddd; }
.tabs { display: flex; align-items: flex-end; height: 24px; padding-right: 5px; }
.tabs.top { height: 27px; }
.tabs button { display: flex; align-items: center; gap: 2px; height: 22px; padding: 0 2px; border: 1px solid #333; border-width: 1px 1px 0 0; background: #1f1f1f; white-space: nowrap; }
.tabs.top button { height: 24px; }
.tabs button.on { height: 24px; margin-bottom: -1px; background: #3b3b3b; border-color: #5a5a5a; border-left-width: 1px; position: relative; }
.tabs.top button.on { height: 27px; }
.tabmenu { margin: 0 0 7px auto; }
.pane { border: 1px solid #5a5a5a; border-right-width: 2px; background: #3b3b3b; padding: 2px 2px 0; }
.sel-frame { border: 1px solid #2d2d2d; border-radius: 2px; padding: 0 33px; }
.sel-preview { aspect-ratio: 1; background: #000; }
.actions { display: flex; height: 25px; color: #bbb; }
.actions button { flex: 1; display: flex; align-items: center; justify-content: center; }
.actions svg { width: 13px; height: 13px; }
.hsplit { height: 3px; display: flex; justify-content: center; gap: 3px; }
.hsplit i { width: 4px; height: 2px; background: #bbb; }
.layers { flex: 1; display: flex; flex-direction: column; }
.mode-row { display: flex; gap: 1px; }
.mode { flex: 1; height: 35px; padding: 0 9px 0 7px; gap: 10px; }
.mode select { margin-left: auto; }
.group { width: 49px; height: 35px; justify-content: space-between; padding: 0 9px 0 4px; }
.opacity { display: flex; align-items: center; height: 25px; margin-top: 1px; padding-left: 2px; border: 1px solid #888; background: #555; }
.opacity input { flex: 1; min-width: 0; text-align: right; padding-right: 1px; font-size: 16px; }
.spin { width: 12px; height: 23px; border-left: 1px solid #000; background: #2d2d2d; display: flex; flex-direction: column; justify-content: space-around; align-items: center; }
.spin svg { width: 8px; height: 8px; }
.spin .dim { opacity: .4; }
.lock { display: flex; align-items: center; height: 25px; gap: 11px; }
.lock span { width: 46px; white-space: nowrap; }
.lock svg { width: 13px; height: 13px; }
.tree { flex: 1; margin-top: 1px; border: 1px solid #333; border-radius: 3px; background: #303030; }
.tree-head { display: grid; grid-template-columns: 27px 27px 1fr; gap: 1px; height: 31px; background: #333; }
.tree-head span { display: flex; align-items: center; justify-content: center; background: #484848; margin: 1px 0 1px 1px; }
.layer { display: flex; align-items: center; height: 40px; padding-left: 4px; background: #1f1f1f; color: #eee; }
.thumb { width: 36px; height: 36px; margin: 0 4px 0 51px; border: 2px solid #fff; background: conic-gradient(#666 25%, #999 0 50%, #666 0 75%, #999 0) 0 0 / 8px 8px; }
.thumb svg { width: 32px; height: 32px; }
.filename { font-size: 16px; }

.menu { position: absolute; left: 1px; top: 35px; width: 465px; padding: 2px 1px; border: 1px solid #5a5a5a; background: #484848; box-shadow: 3px 3px 4px #0008; color: #bbb; }
.menu button { display: flex; align-items: center; width: 100%; height: 33px; padding: 0 9px 0 6px; text-align: left; }
.menu svg { width: 13px; height: 13px; }
.menu span { flex: 1; margin-left: 8px; color: #fff; }
.menu b { font-size: 17px; font-weight: 400; }
.menu kbd { font: inherit; color: #fff; }
.menu .hover { background: #141414; }
.menu hr { height: 1px; margin: 6px 4px 9px; border: 0; background: #191919; }

.tooltip { position: absolute; left: 102px; top: 170px; width: 224px; height: 62px; border: 1px solid #888; border-right: 0; border-radius: 3px 0 0 3px; background: #333; color: #ddd; box-shadow: 2px 2px 3px #0008; font-size: 20px; white-space: nowrap; overflow: hidden; }
.tooltip p { margin: 0; padding: 2px 0 0 3px; line-height: 26px; }
.tooltip .hint { padding: 6px 0 0; font-size: 17px; font-style: italic; text-align: right; }
.arrows { position: absolute; left: 0; top: 0; pointer-events: none; }
```
FILE: rulers.js
```js
const NS = 'http://www.w3.org/2000/svg';
const ZOOM = 0.03125;

function add(parent, name, attrs, text) {
  const el = document.createElementNS(NS, name);
  for (const key in attrs) el.setAttribute(key, attrs[key]);
  if (text !== undefined) el.textContent = text;
  parent.appendChild(el);
}

function drawRuler(svg, vertical) {
  svg.replaceChildren();
  const box = svg.getBoundingClientRect();
  const pic = document.getElementById('picture').getBoundingClientRect();
  const origin = vertical ? pic.top - box.top : pic.left - box.left;
  const length = vertical ? box.height : box.width;
  const line = (x1, y1, x2, y2) => add(svg, 'line', vertical
    ? { x1: y1, y1: x1, x2: y2, y2: x2 } : { x1, y1, x2, y2 });
  line(0, 20.5, length - 2, 20.5);
  const first = Math.ceil(-origin / ZOOM / 500) * 500;
  for (let v = first; origin + v * ZOOM < length - 2; v += 500) {
    const p = Math.round(origin + v * ZOOM) + 0.5;
    const size = v % 5000 === 0 ? 16 : v % 1000 === 0 ? 7 : 4;
    line(p, 21 - size, p, 21);
    if (size < 16) continue;
    if (!vertical) add(svg, 'text', { x: p + 1.5, y: 16 }, v);
    else String(v).split('').forEach((d, i) => add(svg, 'text', { x: 4, y: p + 11 * (i + 1) }, d));
  }
}

function drawRulers() {
  drawRuler(document.getElementById('ruler-h'), false);
  drawRuler(document.getElementById('ruler-v'), true);
}
drawRulers();
window.addEventListener('resize', drawRulers);
```
